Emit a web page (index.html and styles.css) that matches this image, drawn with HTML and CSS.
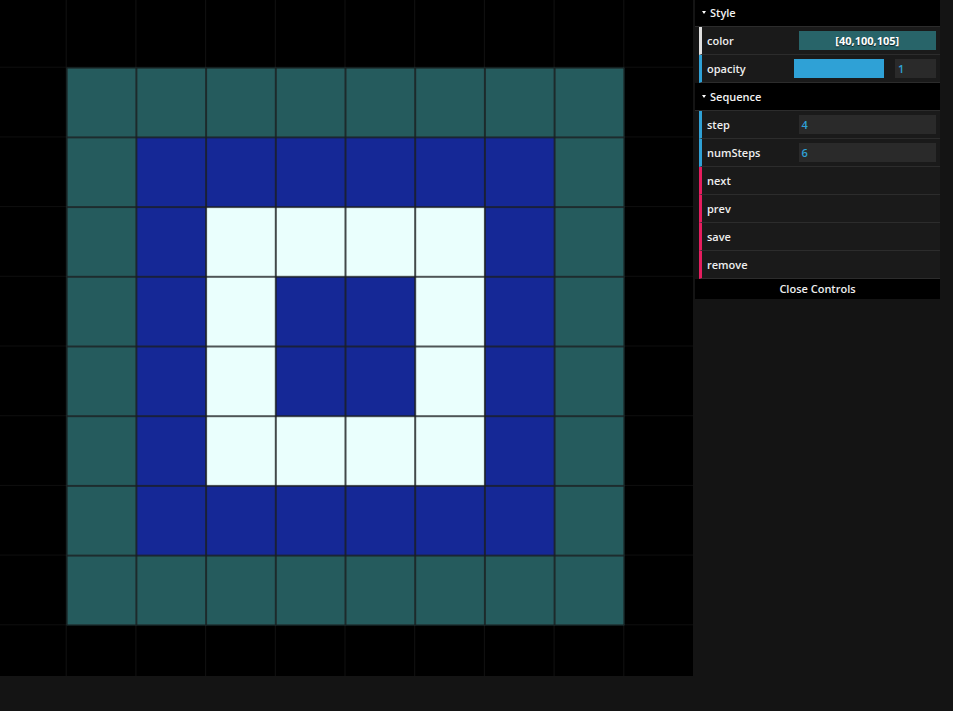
FILE: index.html
```html
<!DOCTYPE html>
<html>
<head>
<meta charset="utf-8">
<link rel="stylesheet" href="styles.css">
</head>
<body>
<div class="app">
  <div class="stage">
    <svg class="canvas" width="693" height="676" viewBox="0 0 693 676">
      <defs>
        <pattern id="grid" x="-3" y="-2" width="69.7" height="69.7" patternUnits="userSpaceOnUse">
          <path d="M69.7 0V69.7M0 69.7H69.7" fill="none" stroke="#1c1c1c" stroke-width="1.2"/>
        </pattern>
        <pattern id="cellgrid" x="-3" y="-2" width="69.7" height="69.7" patternUnits="userSpaceOnUse">
          <path d="M69.7 0V69.7M0 69.7H69.7M0 0V69.7M0 0H69.7" fill="none" stroke="#1a1d1e" stroke-width="1.6"/>
        </pattern>
      </defs>
      <rect x="0" y="0" width="693" height="676" fill="#000"/>
      <rect x="0" y="0" width="693" height="676" fill="url(#grid)"/>
      <rect x="66.7" y="67.7" width="557.6" height="557.6" fill="#255b5d"/>
      <rect x="136.4" y="137.4" width="418.2" height="418.2" fill="#152896"/>
      <rect x="206.1" y="207.1" width="278.8" height="278.8" fill="#eafffd"/>
      <rect x="275.8" y="276.8" width="139.4" height="139.4" fill="#152896"/>
      <rect x="66.7" y="67.7" width="557.6" height="557.6" fill="url(#cellgrid)"/>
    </svg>
  </div>
  <div class="gui">
    <ul class="root">
      <li class="folder">
        <div class="title"><span class="tri"></span>Style</div>
        <ul>
          <li class="cr color">
            <span class="name">color</span>
            <div class="c"><div class="swatch">[40,100,105]</div></div>
          </li>
          <li class="cr number">
            <span class="name">opacity</span>
            <div class="c slider-c">
              <div class="slider"><div class="fg"></div></div>
              <div class="num small">1</div>
            </div>
          </li>
        </ul>
      </li>
      <li class="folder">
        <div class="title"><span class="tri"></span>Sequence</div>
        <ul>
          <li class="cr number">
            <span class="name">step</span>
            <div class="c"><div class="num">4</div></div>
          </li>
          <li class="cr number">
            <span class="name">numSteps</span>
            <div class="c"><div class="num">6</div></div>
          </li>
          <li class="cr function"><span class="name">next</span></li>
          <li class="cr function"><span class="name">prev</span></li>
          <li class="cr function"><span class="name">save</span></li>
          <li class="cr function"><span class="name">remove</span></li>
        </ul>
      </li>
    </ul>
    <div class="close">Close Controls</div>
  </div>
</div>
</body>
</html>
```

FILE: styles.css
```css
html, body {
  margin: 0;
  padding: 0;
  background: #141414;
  height: 100%;
  overflow: hidden;
}

.app {
  display: flex;
  align-items: flex-start;
  gap: 2px;
}

.stage {
  width: 693px;
  height: 676px;
  flex: none;
}

.canvas {
  display: block;
}

.gui {
  width: 245px;
  flex: none;
  font-family: "Open Sans", "DejaVu Sans", sans-serif;
  font-size: 11px;
  font-weight: 600;
  color: #eee;
  margin-top: -1px;
}

.gui ul {
  list-style: none;
  margin: 0;
  padding: 0;
}

.folder {
  border-left: 4px solid transparent;
}

.title {
  margin-left: -4px;
  height: 27px;
  line-height: 27px;
  background: #000;
  border-bottom: 1px solid #2c2c2c;
  display: flex;
  align-items: center;
  padding-left: 7px;
  gap: 4px;
  color: #f2f2f2;
}

.tri {
  width: 0;
  height: 0;
  border-left: 2.5px solid transparent;
  border-right: 2.5px solid transparent;
  border-top: 3px solid #fff;
  margin-top: -1px;
}

.cr {
  height: 27px;
  line-height: 27px;
  background: #1a1a1a;
  border-bottom: 1px solid #2c2c2c;
  border-left: 3px solid #2fa1d6;
  padding: 0 4px 0 5px;
  display: flex;
  align-items: center;
}

.cr.color {
  border-left-color: #e0e0e0;
}

.cr.function {
  border-left-color: #e61d5f;
}

.name {
  width: 40%;
  flex: none;
  white-space: nowrap;
}

.c {
  width: 60%;
  flex: none;
  display: flex;
  align-items: center;
}

.swatch {
  width: 100%;
  height: 19px;
  line-height: 19px;
  background: rgb(40, 100, 105);
  color: #fff;
  font-weight: 700;
  text-align: center;
  text-shadow: rgba(0, 0, 0, 0.7) 0 1px 1px;
}

.slider-c {
  justify-content: space-between;
}

.slider {
  width: 66%;
  height: 19px;
  margin-left: -5px;
  background: #2a2a2a;
}

.slider .fg {
  width: 100%;
  height: 100%;
  background: #2fa1d6;
}

.num {
  width: 100%;
  height: 19px;
  line-height: 19px;
  background: #2a2a2a;
  color: #2fa1d6;
  padding-left: 3px;
  box-sizing: border-box;
}

.num.small {
  width: 41px;
}

.close {
  height: 20px;
  line-height: 20px;
  background: #000;
  text-align: center;
  color: #eee;
}
```
